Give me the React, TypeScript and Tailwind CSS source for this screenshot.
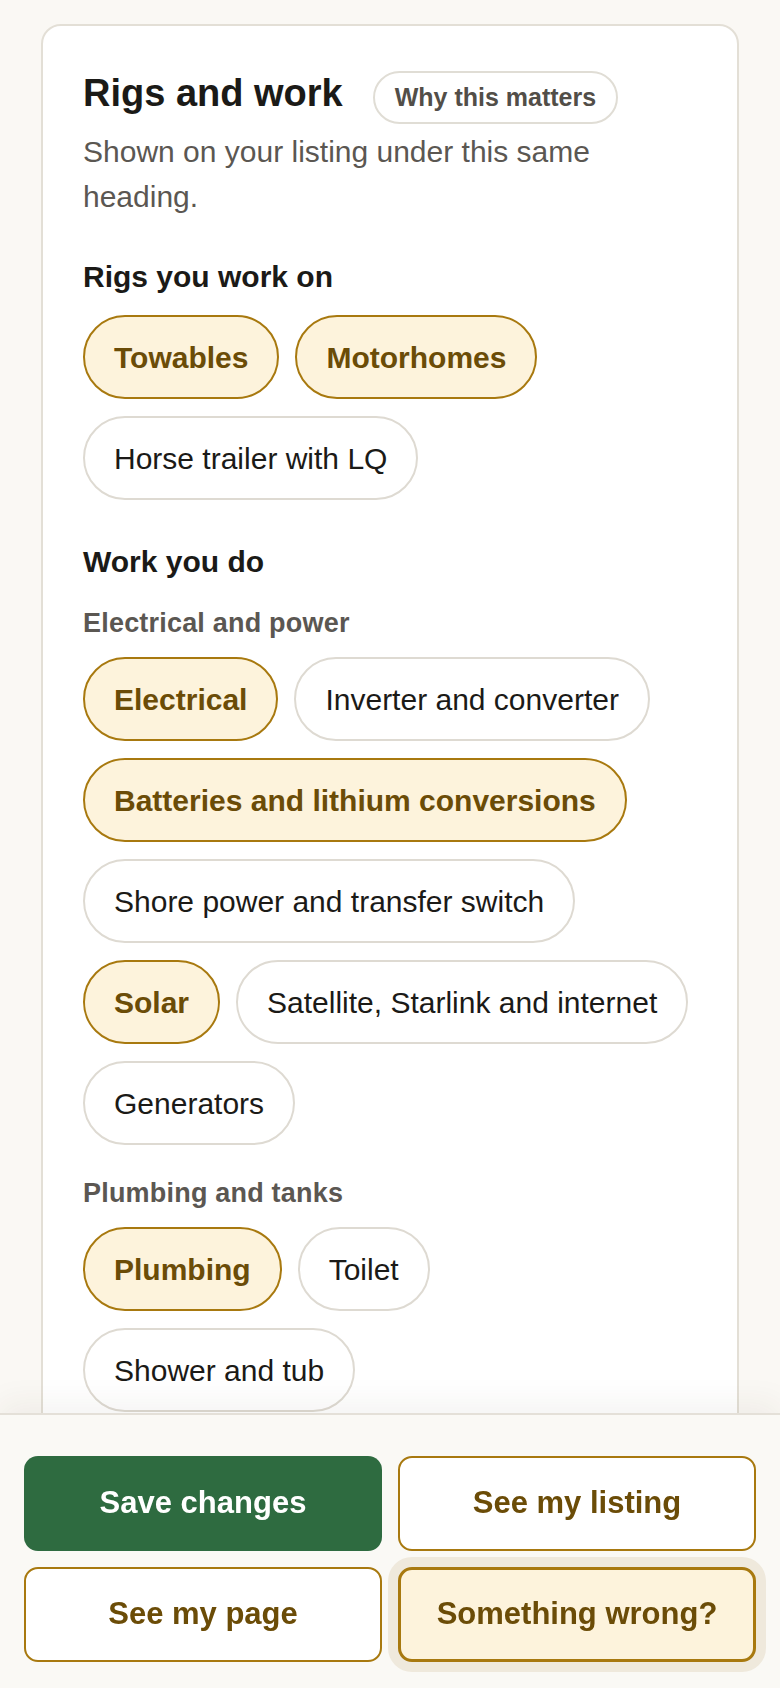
import React, { useState } from 'react';

type Group = { label: string; options: string[] };

const rigOptions = ['Towables', 'Motorhomes', 'Horse trailer with LQ'];

const workGroups: Group[] = [
  {
    label: 'Electrical and power',
    options: [
      'Electrical',
      'Inverter and converter',
      'Batteries and lithium conversions',
      'Shore power and transfer switch',
      'Solar',
      'Satellite, Starlink and internet',
      'Generators',
    ],
  },
  {
    label: 'Plumbing and tanks',
    options: ['Plumbing', 'Toilet', 'Shower and tub'],
  },
];

const Chip: React.FC<{ label: string; active: boolean; onToggle: () => void }> = ({ label, active, onToggle }) => (
  <button
    type="button"
    onClick={onToggle}
    className={
      active
        ? 'inline-flex items-center h-[84px] px-[29px] rounded-full border-2 border-[#a8790f] bg-[#fdf3dc] text-[30px] font-bold text-[#6b4c07] whitespace-nowrap'
        : 'inline-flex items-center h-[84px] px-[29px] rounded-full border-2 border-[#dedad2] bg-white text-[30px] text-[#1b1a17] whitespace-nowrap'
    }
  >
    {label}
  </button>
);

const App: React.FC = () => {
  const [selected, setSelected] = useState<string[]>([
    'Towables',
    'Motorhomes',
    'Electrical',
    'Batteries and lithium conversions',
    'Solar',
    'Plumbing',
  ]);

  const toggle = (name: string) =>
    setSelected((prev) => (prev.includes(name) ? prev.filter((n) => n !== name) : [...prev, name]));

  return (
    <div className="min-h-screen bg-[#faf8f4] pt-6 pb-[320px] font-['Liberation_Sans',Arial,sans-serif]">
      <div className="mx-[41px] rounded-[20px] border-2 border-[#e3dfd6] bg-white px-10 pt-[45px] pb-12">
        <div className="flex items-start gap-[30px]">
          <h1 className="text-[38px] leading-[1.2] font-bold text-[#1b1a17]">Rigs and work</h1>
          <button
            type="button"
            className="h-[53px] px-5 rounded-full border-2 border-[#e0ddd5] text-[25px] font-bold text-[#524e48] whitespace-nowrap"
          >
            Why this matters
          </button>
        </div>
        <p className="mt-[5px] text-[30px] leading-[45px] text-[#5b5752]">
          Shown on your listing under this same heading.
        </p>

        <h2 className="mt-10 text-[30px] leading-[36px] font-bold text-[#1b1a17]">Rigs you work on</h2>
        <div className="mt-5 flex flex-wrap gap-x-4 gap-y-[17px]">
          {rigOptions.map((r) => (
            <Chip key={r} label={r} active={selected.includes(r)} onToggle={() => toggle(r)} />
          ))}
        </div>

        <h2 className="mt-[44px] text-[30px] leading-[36px] font-bold text-[#1b1a17]">Work you do</h2>
        {workGroups.map((g, i) => (
          <div key={g.label} className={i === 0 ? 'mt-[27px]' : 'mt-8'}>
            <h3 className="text-[27px] leading-[32px] font-bold tracking-[0.2px] text-[#5b5752]">{g.label}</h3>
            <div className="mt-[18px] flex flex-wrap gap-x-4 gap-y-[17px]">
              {g.options.map((o) => (
                <Chip key={o} label={o} active={selected.includes(o)} onToggle={() => toggle(o)} />
              ))}
            </div>
          </div>
        ))}
      </div>

      {/* sticky action bar */}
      <div className="fixed inset-x-0 bottom-0 border-t-2 border-[#e4e0d8] bg-[#faf9f5] px-6 pt-[41px] pb-[26px] shadow-[0_-10px_30px_rgba(60,50,30,0.06)]">
        <div className="grid grid-cols-2 gap-4">
          <button
            type="button"
            className="h-[95px] rounded-[14px] bg-[#2e6b40] text-[31px] font-bold text-white"
          >
            Save changes
          </button>
          <button
            type="button"
            className="h-[95px] rounded-[14px] border-2 border-[#a8790f] bg-white text-[31px] font-bold text-[#6b4c07]"
          >
            See my listing
          </button>
          <button
            type="button"
            className="h-[95px] rounded-[14px] border-2 border-[#a8790f] bg-white text-[31px] font-bold text-[#6b4c07]"
          >
            See my page
          </button>
          <button
            type="button"
            className="h-[95px] rounded-[14px] border-[3px] border-[#a8790f] bg-[#fdf3dc] text-[31px] font-bold text-[#6b4c07] shadow-[0_0_0_10px_#efe9dc]"
          >
            Something wrong?
          </button>
        </div>
      </div>
    </div>
  );
};

export default App;
